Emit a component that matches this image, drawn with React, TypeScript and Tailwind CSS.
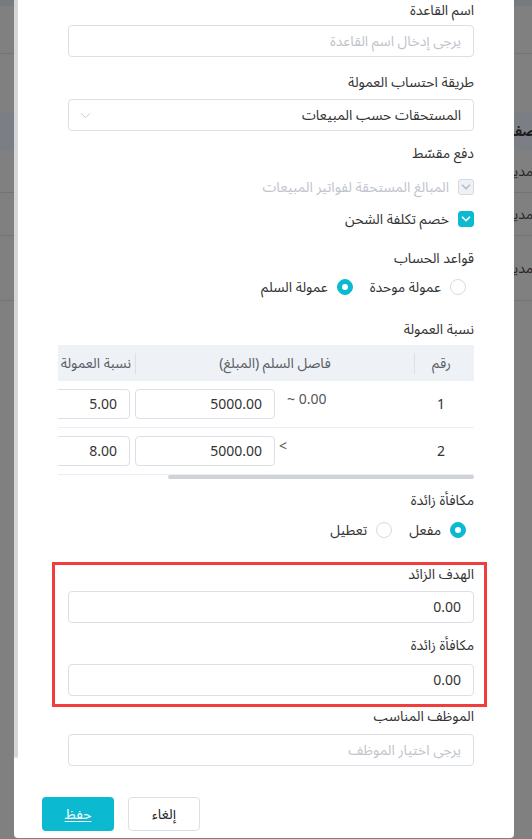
import React from "react";

const cyan = "#0bb9d1";

function Label({ children, className = "" }: { children: React.ReactNode; className?: string }) {
	return <div className={`leading-[22px] text-[14px] text-[#333] ${className}`}>{children}</div>;
}

function Field({ value, placeholder, className = "" }: { value?: string; placeholder?: string; className?: string }) {
	return (
		<div className={`ml-[10px] h-[32px] rounded-[4px] border border-[#dcdfe6] bg-white flex items-center pr-[12px] text-[14px] ${className}`}>
			{value ? <span className="text-[#333]">{value}</span> : <span className="text-[#c0c4cc]">{placeholder}</span>}
		</div>
	);
}

function CheckRow({ checked, disabled, label, className = "" }: { checked?: boolean; disabled?: boolean; label: string; className?: string }) {
	return (
		<div className={`flex items-center h-[22px] gap-[9px] ${className}`}>
			<span className={`w-[16px] h-[16px] rounded-[3px] border flex items-center justify-center ${checked ? "bg-[#0bb9d1] border-[#0bb9d1]" : "bg-[#eef1f6] border-[#d6dae0]"}`}>
				<svg viewBox="0 0 16 16" className="w-[14px] h-[14px]">
					<polyline points="4,6 8,10 12,6" fill="none" stroke={checked ? "#fff" : "#b8bdc6"} strokeWidth="2" strokeLinecap="round" strokeLinejoin="round" />
				</svg>
			</span>
			<span className={`text-[14px] ${disabled ? "text-[#c0c4cc]" : "text-[#333]"}`}>{label}</span>
		</div>
	);
}

function Radio({ on, label }: { on?: boolean; label: string }) {
	return (
		<div className="flex items-center gap-[9px]">
			<span className={`w-[16px] h-[16px] rounded-full border flex items-center justify-center ${on ? "bg-[#0bb9d1] border-[#0bb9d1]" : "bg-white border-[#d6dae0]"}`}>
				{on && <span className="w-[6px] h-[6px] rounded-full bg-white" />}
			</span>
			<span className="text-[14px] text-[#333]">{label}</span>
		</div>
	);
}

function CellInput({ value, w }: { value: string; w: string }) {
	return (
		<div className={`${w} h-[30px] shrink-0 rounded-[4px] border border-[#dcdfe6] bg-white flex items-center pr-[12px] text-[14px] text-[#333]`}>
			{value}
		</div>
	);
}

function TableRow({ n, from, fromGap, amount, rate }: { n: string; from: string; fromGap: string; amount: string; rate: string }) {
	return (
		<div className="flex items-center h-[47px] border-b border-[#ebeef5]">
			<div className="w-[60px] shrink-0 text-center pr-[6px] text-[14px] text-[#333]">{n}</div>
			<div className="w-[279px] shrink-0 flex justify-end items-start">
				<span dir="ltr" className={`leading-[22px] text-[14px] text-[#555] ${fromGap}`}>{from}</span>
				<CellInput value={amount} w="w-[140px]" />
			</div>
			<div className="pr-[5px]">
				<CellInput value={rate} w="w-[150px]" />
			</div>
		</div>
	);
}

export default function App() {
	return (
		<div dir="rtl" className="w-[532px] h-[839px] relative overflow-hidden bg-[#808080] font-['Noto_Sans_Arabic','Noto_Sans','DejaVu_Sans',sans-serif]">
			{/* page behind the overlay */}
			<div className="flex flex-col">
				<div className="h-[6px] bg-[#777a7e]" />
				<div className="h-[48px] border-b border-[#747474]" />
				<div className="h-[59px]" />
				<div className="h-[37px] bg-[#7b7e85] flex items-center text-[14px] font-bold text-[#1e1e1e] whitespace-nowrap">
					<span className="-mr-[4px]">صفة الموظف</span>
				</div>
				<div className="h-[43px] border-b border-[#747474] flex items-center text-[14px] text-[#262626] whitespace-nowrap">
					<span className="-mr-[1px]">مدير المبيعات</span>
				</div>
				<div className="h-[43px] border-b border-[#747474] flex items-center text-[14px] text-[#262626] whitespace-nowrap">
					<span className="-mr-[1px]">مدير الفرع</span>
				</div>
				<div className="h-[65px] border-b border-[#747474] flex items-center text-[14px] text-[#262626] whitespace-nowrap">
					<span className="-mr-[1px]">مدير الحسابات</span>
				</div>
			</div>

			{/* dialog */}
			<div className="absolute left-[14px] top-0 w-[500px] h-[838px] bg-white rounded-b-[4px] flex flex-col">
				<div className="h-[780px] flex overflow-hidden">
					<div className="flex-1 min-w-0 px-[40px]">
						<Label>اسم القاعدة</Label>
						<Field placeholder="يرجى إدخال اسم القاعدة" className="mt-[3px]" />

						<Label className="mt-[15px]">طريقة احتساب العمولة</Label>
						<div className="mt-[5px] ml-[10px] h-[32px] rounded-[4px] border border-[#dcdfe6] flex items-center justify-between pr-[12px] pl-[11px] text-[14px] text-[#333]">
							<span>المستحقات حسب المبيعات</span>
							<svg viewBox="0 0 12 7" className="w-[11px] h-[7px]">
								<polyline points="1,1 6,6 11,1" fill="none" stroke="#c0c4cc" strokeWidth="1" />
							</svg>
						</div>

						<Label className="mt-[12px]">دفع مقسّط</Label>
						<CheckRow disabled label="المبالغ المستحقة لفواتير المبيعات" className="mt-[11px]" />
						<CheckRow checked label="خصم تكلفة الشحن" className="mt-[10px]" />

						<Label className="mt-[18px]">قواعد الحساب</Label>
						<div className="mt-[6px] h-[22px] flex items-center pr-[8px] gap-[17px]">
							<Radio label="عمولة موحدة" />
							<Radio on label="عمولة السلم" />
						</div>

						<Label className="mt-[21px]">نسبة العمولة</Label>
						<div className="mt-[4px] overflow-hidden">
							<div className="w-[500px]">
								<div className="h-[36px] bg-[#eef1f6] flex items-center text-[14px] text-[#5a5e66]">
									<div className="w-[60px] shrink-0 flex items-center">
										<span className="flex-1 text-center pr-[6px]">رقم</span>
										<span className="w-px h-[21px] bg-[#dcdfe6]" />
									</div>
									<div className="w-[279px] shrink-0 flex items-center">
										<span className="flex-1 text-center">فاصل السلم (المبلغ)</span>
										<span className="w-px h-[21px] bg-[#dcdfe6]" />
									</div>
									<div className="pr-[4px] whitespace-nowrap">نسبة العمولة</div>
								</div>
								<TableRow n="1" from="~ 0.00" fromGap="ml-[12px]" amount="5000.00" rate="5.00" />
								<TableRow n="2" from="<" fromGap="ml-[4px]" amount="5000.00" rate="8.00" />
							</div>
						</div>
						<div className="h-[5px]">
							<div className="w-[306px] h-[4px] rounded-[2px] bg-[#cfd3d7]" />
						</div>

						<Label className="mt-[10px]">مكافأة زائدة</Label>
						<div className="mt-[7px] h-[22px] flex items-center pr-[8px] gap-[17px]">
							<Radio on label="مفعل" />
							<Radio label="تعطيل" />
						</div>

						<div className="relative mt-[23px]">
							<div className="absolute top-[-2px] bottom-[-11px] left-[-6px] right-[-13px] border-[3px] border-[#f23d3d] pointer-events-none" />
							<Label>الهدف الزائد</Label>
							<Field value="0.00" className="mt-[5px]" />
							<Label className="mt-[12px]">مكافأة زائدة</Label>
							<Field value="0.00" className="mt-[7px]" />
						</div>

						<Label className="mt-[10px]">الموظف المناسب</Label>
						<Field placeholder="يرجى اختيار الموظف" className="mt-[6px]" />
					</div>
					<div className="w-[4px] shrink-0">
						<div className="h-[758px] bg-[#d3d7db] rounded-b-[2px]" />
					</div>
				</div>

				<div className="flex-1 flex justify-end items-start pt-[17px] pl-[28px] gap-[14px]">
					<button className="w-[72px] h-[34px] rounded-[4px] border border-[#dcdfe6] bg-white text-[14px] text-[#222]">إلغاء</button>
					<button className="w-[72px] h-[34px] rounded-[4px] text-[14px] text-white underline underline-offset-2" style={{ backgroundColor: cyan }}>حفظ</button>
				</div>
			</div>
		</div>
	);
}
